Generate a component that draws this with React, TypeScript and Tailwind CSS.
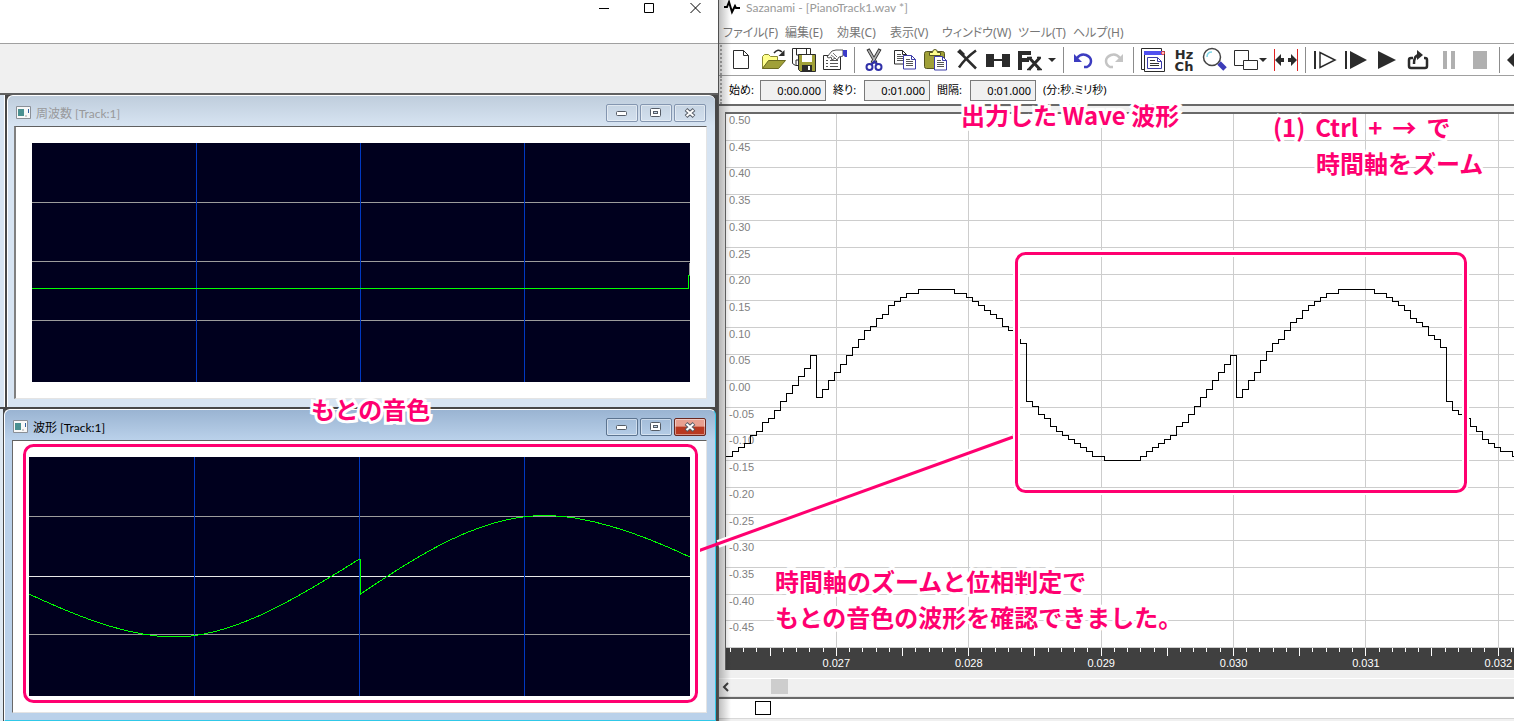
import type { ReactNode } from "react";
import clsx from "clsx";

const SAMPLES = [
  456, 451, 447, 443, 435, 431, 422, 418, 410, 401, 393, 385, 376, 368, 355,
  397, 389, 380, 372, 364, 355, 347, 339, 330, 326, 318, 314, 305, 301, 297,
  293, 293, 289, 289, 289, 289, 289, 289, 293, 293, 297, 301, 305, 310, 314,
  318, 326, 330, 339, 343, 401, 406, 414, 418, 426, 431, 435, 439, 443, 447,
  451, 456, 456, 460, 460, 460, 460, 460, 460, 456, 451, 447, 443, 439, 435,
  426, 422, 414, 406, 397, 389, 380, 372, 364, 355, 397, 389, 380, 372, 360,
  351, 343, 339, 330, 322, 318, 310, 305, 301, 297, 293, 293, 289, 289, 289,
  289, 289, 289, 293, 293, 297, 301, 305, 310, 318, 322, 326, 335, 339, 347,
  401, 410, 414, 418, 426, 431, 439, 443, 447, 451, 451, 456,
];

const LEVELS = [
  "0.50", "0.45", "0.40", "0.35", "0.30", "0.25", "0.20", "0.15", "0.10",
  "0.05", "0.00", "-0.05", "-0.10", "-0.15", "-0.20", "-0.25", "-0.30",
  "-0.35", "-0.40", "-0.45",
];

const TIMES = ["0.027", "0.028", "0.029", "0.030", "0.031", "0.032"];

const MENUS = [
  { label: "ファイル(F)", width: "w-[62px]" },
  { label: "編集(E)", width: "w-[52px]" },
  { label: "効果(C)", width: "w-[53px]" },
  { label: "表示(V)", width: "w-[52px]" },
  { label: "ウィンドウ(W)", width: "w-[76px]" },
  { label: "ツール(T)", width: "w-[55px]" },
  { label: "ヘルプ(H)", width: "w-[60px]" },
];

const RANGES = [
  { id: "start", label: "始め:", value: "0:00.000" },
  { id: "end", label: "終り:", value: "0:01.000" },
  { id: "length", label: "間隔:", value: "0:01.000" },
];

// one sample is 6px wide, the plot starts at y = 114
const wavePath = SAMPLES.map((y, i) => {
  const v = y - 114 + 0.5;
  return i === 0 ? `M0 ${v}H6.5` : `V${v}H${i * 6 + 6.5}`;
}).join("");

interface ToolProps {
  label: string;
  children: ReactNode;
}

const Tool = ({ label, children }: ToolProps) => (
  <button
    type="button"
    aria-label={label}
    className="flex h-[26px] w-[31px] shrink-0 items-center justify-center"
  >
    <svg width="26" height="26" viewBox="0 0 26 26" fill="none">
      {children}
    </svg>
  </button>
);

const Separator = () => (
  <span className="flex w-2 shrink-0 justify-center">
    <span className="h-[26px] w-px bg-[#8c8c8c]" />
  </span>
);

const Sheet = ({ x, y, color }: { x: number; y: number; color: string }) => (
  <g transform={`translate(${x} ${y})`}>
    <path d="M.5.5h8l4 4v9.500h-12z" fill="#fff" stroke={color} />
    <path d="M8.500.5v4h4" stroke={color} />
    <path d="M3 4.500h4M3 6.500h7M3 8.500h7M3 10.500h7" stroke="#555" />
  </g>
);

const Toolbar = () => (
  <div className="flex h-8 items-center overflow-hidden border-t border-[#a0a0a0] bg-white">
    <span className="ml-px mr-1 h-[30px] shrink-0 border-l-2 border-dotted border-[#b0b0b0]" />
    <Tool label="新規">
      <path d="M4.500 3.500h10l5 5v13h-15z" fill="#fff" stroke="#2b2b2b" />
      <path d="M14.500 3.500v5h5" stroke="#2b2b2b" />
    </Tool>
    <Tool label="開く">
      <path d="M2.500 21.500v-12l2-2h4l2 2h7v4h-8z" fill="#ffff8c" stroke="#8a8a30" />
      <path d="M2.500 21.500l6-8h17l-7 8z" fill="#a0a038" stroke="#6a6a20" />
      <path d="M14 6q4-5 8-1" stroke="#2b2b2b" strokeWidth="1.500" />
      <path d="M24.500 3v6h-6z" fill="#2b2b2b" />
    </Tool>
    <Tool label="保存">
      <path d="M1.500 1.500h18v17h-15l-3-2z" fill="#fff" stroke="#2b2b2b" />
      <path d="M5.500 2v6h10V2M5 18v-5h4" stroke="#2b2b2b" />
      <path d="M7.500 7.500h17v17h-15l-2-2z" fill="#a0a038" stroke="#2b2b2b" />
      <path d="M11 8h10v7H11z" fill="#fff" />
      <path d="M11 18h10v6H11z" fill="#2b2b2b" />
      <path d="M17 19h2v4h-2z" fill="#fff" />
    </Tool>
    <Tool label="プロパティ">
      <path d="M1.500 8.500h17v14h-17z" fill="#fff" stroke="#2b2b2b" />
      <path d="M4 13.500h2M8 13.500h8M4 16.500h2M8 16.500h8M4 19.500h2M8 19.500h8" stroke="#555" />
      <path d="M5 10l5-6 4-1h7v6l-4 1-2 3-2-2-3 2-1-3-2 1z" fill="#fff" stroke="#555" />
      <path d="M9 8l4 3M11 6l4 4" stroke="#777" />
      <path d="M21 3h4v7h-2l-2-2z" fill="#3c3cc8" />
    </Tool>
    <Separator />
    <Tool label="切り取り">
      <path d="M7 2l8 14M19 2l-8 14" stroke="#333" strokeWidth="3.500" />
      <path d="M7.500 3l7 12M18.500 3l-7 12" stroke="#b0b0b0" strokeWidth="1.500" />
      <circle cx="8.500" cy="20" r="3" stroke="#3030a8" strokeWidth="2" />
      <circle cx="17.500" cy="20" r="3" stroke="#3030a8" strokeWidth="2" />
      <path d="M10.500 17.500l3-3 3 3" stroke="#3030a8" strokeWidth="2" />
    </Tool>
    <Tool label="コピー">
      <Sheet x={2} y={3} color="#2b2b2b" />
      <Sheet x={11} y={8} color="#3c3ca8" />
    </Tool>
    <Tool label="貼り付け">
      <rect x="1.500" y="4.500" width="20" height="17" rx="2" fill="#a0a038" stroke="#555520" />
      <path d="M6.500 8.500v-3h3q0-3 2.500-3t2.500 3h3v3z" fill="#ffff8c" stroke="#555520" />
      <Sheet x={11} y={9} color="#3c3ca8" />
    </Tool>
    <Tool label="削除">
      <path d="M5 4.500q8 8 17 17" stroke="#2b2b2b" strokeWidth="2.500" />
      <path d="M22 3.500q-11 8-17 17" stroke="#2b2b2b" strokeWidth="2.500" />
      <path d="M3 5l3-3 5 5-2 2z" fill="#2b2b2b" />
    </Tool>
    <Tool label="間隔">
      <path d="M1 7h8v5h8V7h8v13h-8v-6H9v6H1z" fill="#2b2b2b" />
    </Tool>
    <button type="button" aria-label="エフェクト" className="shrink-0">
      <svg width="46" height="26" viewBox="0 0 46 26" fill="none">
        <path d="M5 4h13v4H9v3h7v4H9v8H5z" fill="#2b2b2b" />
        <path d="M16 10.500l11 12M27 10.500l-11 12" stroke="#2b2b2b" strokeWidth="3" />
        <path d="M14 10.500h5M24 10.500h4M14 22.500h4M24 22.500h5" stroke="#2b2b2b" strokeWidth="1.500" />
        <path d="M35 11h8l-4 4z" fill="#2b2b2b" />
      </svg>
    </button>
    <Separator />
    <Tool label="元に戻す">
      <path d="M7 11q4-5 9-3t5 6-4 6h-3" stroke="#3c3cc0" strokeWidth="2.500" />
      <path d="M4 7v8h8z" fill="#3c3cc0" />
    </Tool>
    <Tool label="やり直し">
      <path d="M19 11q-4-5-9-3t-5 6 4 6h3" stroke="#c4c4c4" strokeWidth="2.500" />
      <path d="M22 7v8h-8z" fill="#c4c4c4" />
    </Tool>
    <Separator />
    <Tool label="ウィンドウ">
      <path d="M4.500 22.500h-3v-21h20v3" stroke="#2b2b2b" />
      <path d="M4.500 4.500h20v20h-20z" fill="#fff" stroke="#2b2b2b" />
      <path d="M4 4h19v4H4z" fill="#5050f0" />
      <circle cx="23" cy="6" r="1.500" fill="#fff" stroke="#f03030" />
      <path d="M7.500 10.500h10l4 4v7h-14z" fill="#fff" stroke="#3c3ca8" />
      <path d="M17.500 10.500v4h4" stroke="#3c3ca8" />
      <path d="M10 13.500h5M10 16.500h9M10 18.500h9" stroke="#333" />
    </Tool>
    <Tool label="周波数とチャンネル">
      <g fill="#2b2b2b" textAnchor="middle" className="font-['DejaVu_Sans',sans-serif] text-[13px] font-bold">
        <text x="13" y="12">Hz</text>
        <text x="13" y="24">Ch</text>
      </g>
    </Tool>
    <Tool label="拡大">
      <path d="M17 16l6 6" stroke="#3c3cb8" strokeWidth="5" />
      <circle cx="10" cy="10" r="8.500" fill="#fff" stroke="#444" strokeWidth="1.500" />
      <path d="M5 10q0-5 5-5" stroke="#80d8e8" strokeWidth="1.500" />
    </Tool>
    <button type="button" aria-label="配置" className="shrink-0">
      <svg width="40" height="26" viewBox="0 0 40 26" fill="none">
        <path d="M4.500 3.500h14v15h-14z" fill="#fff" stroke="#2b2b2b" />
        <path d="M13.500 13.500h14v9h-14z" fill="#fff" stroke="#2b2b2b" />
        <path d="M29 11h8l-4 4z" fill="#2b2b2b" />
      </svg>
    </button>
    <Tool label="幅を合わせる">
      <path d="M1.500 2v22M24.500 2v22" stroke="#e02020" />
      <path d="M2 13l6-6v4h3v4H8v4zM24 13l-6-6v4h-3v4h3v4z" fill="#2b2b2b" />
    </Tool>
    <Separator />
    <Tool label="先頭から再生">
      <path d="M3 4v18" stroke="#2b2b2b" strokeWidth="2" />
      <path d="M8 5.500v15l15-7.500z" stroke="#2b2b2b" strokeWidth="1.500" />
    </Tool>
    <Tool label="範囲を再生">
      <path d="M3 4v18" stroke="#2b2b2b" strokeWidth="2" />
      <path d="M7 4v18l17-9z" fill="#2b2b2b" />
    </Tool>
    <Tool label="再生">
      <path d="M4 4v18l18-9z" fill="#2b2b2b" />
    </Tool>
    <Tool label="ループ">
      <path d="M8 11H6q-2 0-2 2v6q0 2 2 2h14q2 0 2-2v-6q0-2-2-2h-1M9 17q0-9 5-9" stroke="#2b2b2b" strokeWidth="2.500" />
      <path d="M12 3l6 5-6 5z" fill="#2b2b2b" />
    </Tool>
    <Tool label="一時停止">
      <path d="M7 4h4v18H7zM15 4h4v18h-4z" fill="#b0b0b0" />
    </Tool>
    <Tool label="停止">
      <path d="M6 4h14v18H6z" fill="#b0b0b0" />
    </Tool>
    <Separator />
    <Tool label="先頭へ">
      <path d="M1 13l9-9v18z" fill="#2b2b2b" />
    </Tool>
  </div>
);

interface WindowProps {
  title: string;
  active?: boolean;
  children: ReactNode;
}

const CAPTION_BUTTON =
  "flex h-[18px] w-8 items-center justify-center rounded-xs border shadow-[inset_0_0_0_1px_#ffffff70]";

const ChildWindow = ({ title, active, children }: WindowProps) => (
  <section
    className={clsx(
      "flex min-w-0 flex-1 flex-col rounded-t-md border-l border-t border-white pr-2",
      active
        ? "border-r border-b border-r-[#30c8e8] border-b-[#30c8e8] bg-[#bad1ea] bg-linear-to-b from-[#9ab4d2] to-[#bad1ea] to-[30px] pb-[7px] pl-[7px]"
        : "bg-[#d7e4f2] bg-linear-to-b from-[#bfcddc] to-[#d7e4f2] to-[30px] pb-2 pl-1.5"
    )}
  >
    <header className="flex h-[30px] shrink-0 items-center gap-1">
      <svg
        width="16"
        height="14"
        viewBox="0 0 16 14"
        className={clsx("mt-1 shrink-0", active ? "ml-px" : "ml-0.5")}
      >
        <path d="M.5.5h14v12H.5z" fill="#f8f8f8" stroke="#8a8f96" />
        <path d="M2 3h6v7H2z" fill="#4a9090" />
        <path d="M12 3h1v4h-1z" fill="#3060a0" />
        <path d="M9 9h2v2H9z" fill="#ccc" />
      </svg>
      <h2
        className={clsx(
          "mt-1.5 font-['Lato','Noto_Sans_CJK_JP',sans-serif] text-xs",
          active ? "text-black" : "text-[#98999b]"
        )}
      >
        {title}
      </h2>
      <div className="mt-1 ml-auto flex gap-0.5 pr-px">
        <button type="button" aria-label="最小化" className={clsx(CAPTION_BUTTON, active ? "border-[#5c7490]" : "border-[#8496b0]")}>
          <svg width="12" height="6" viewBox="0 0 12 6">
            <rect x=".5" y="1.500" width="10" height="4" rx="1" fill="#fff" stroke="#555c66" />
          </svg>
        </button>
        <button type="button" aria-label="最大化" className={clsx(CAPTION_BUTTON, active ? "border-[#5c7490]" : "border-[#8496b0]")}>
          <svg width="12" height="10" viewBox="0 0 12 10">
            <rect x=".5" y=".5" width="10" height="8" rx="1" fill="#fff" stroke="#555c66" />
            <rect x="3.500" y="3.500" width="4" height="2" fill="#c8d8e8" stroke="#555c66" />
          </svg>
        </button>
        <button
          type="button"
          aria-label="閉じる"
          className={clsx(CAPTION_BUTTON, active ? "border-[#6a2820] bg-linear-to-b from-[#e8a090] from-45% to-[#b83820] to-50%" : "border-[#8496b0]")}
        >
          <svg width="12" height="10" viewBox="0 0 12 10" fill="none">
            <path d="M2 1.500l8 7M10 1.500l-8 7" stroke="#555c66" strokeWidth="4" />
            <path d="M2.500 2l7 6M9.500 2l-7 6" stroke="#fff" strokeWidth="2" />
          </svg>
        </button>
      </div>
    </header>
    <div
      className={clsx(
        "min-h-0 flex-1 border-t border-r border-b border-t-[#606060] border-r-[#e4e4e4] border-b-[#e4e4e4] bg-white p-4",
        active ? "border-l border-l-[#696969]" : "border-l-2 border-l-[#808080]"
      )}
    >
      {children}
    </div>
  </section>
);

const SpectrumPlot = () => (
  <svg
    viewBox="0 0 658 239"
    preserveAspectRatio="none"
    shapeRendering="crispEdges"
    fill="none"
    className="block size-full bg-[#00001e]"
  >
    <path d="M0 59.500h658M0 118.500h658M0 177.500h658" stroke="#9c9c9c" />
    <path d="M164.500 0v239M328.500 0v239M492.500 0v239" stroke="#0038c0" />
    <path d="M657.500 120v12" stroke="#9c9c9c" />
    <path d="M0 145.500h656.500V132h1" stroke="#00ff00" />
  </svg>
);

const TonePlot = () => (
  <svg
    viewBox="0 0 661 239"
    preserveAspectRatio="none"
    shapeRendering="crispEdges"
    fill="none"
    className="block size-full bg-[#00001e]"
  >
    <path d="M0 59.500h661M0 177.500h661" stroke="#9c9c9c" />
    <path d="M0 119.500h661" stroke="#e8e8e8" />
    <path d="M165.500 0v239M330.500 0v239M495.500 0v239" stroke="#0038c0" />
    <path
      d="M0 137C60 165 105 180 146 180C205 180 270 140 330.500 102H331.500V137C390 98 450 58.500 516 58.500C560 58.500 610 76 661 100"
      stroke="#00ff00"
    />
  </svg>
);

const ToneEditor = () => (
  <section className="flex min-h-0 min-w-0 flex-col bg-white">
    <div className="flex h-[43px] shrink-0 items-start justify-end gap-[35px] pr-[17px]">
      <button type="button" aria-label="最小化">
        <svg width="11" height="17" viewBox="0 0 11 17">
          <path d="M1 8.500h10" stroke="#000" />
        </svg>
      </button>
      <button type="button" aria-label="最大化">
        <svg width="11" height="17" viewBox="0 0 11 17" fill="none">
          <path d="M.5 3.500h9v9h-9z" stroke="#000" />
        </svg>
      </button>
      <button type="button" aria-label="閉じる">
        <svg width="11" height="17" viewBox="0 0 11 17">
          <path d="M.5 3l10 10M10.500 3l-10 10" stroke="#000" />
        </svg>
      </button>
    </div>
    <div className="h-[52px] shrink-0 border-t border-b-2 border-t-[#a0a0a0] border-b-[#606060] bg-[#f0f0f0]" />
    <div className="grid min-h-0 flex-1 grid-rows-2 bg-[#484848]">
      <div className="flex min-h-0 border-b border-[#484848] pr-[3px]">
        <span className="mr-0.5 w-[5px] border-r border-white bg-[#d7e4f2]" />
        <ChildWindow title="周波数 [Track:1]">
          <SpectrumPlot />
        </ChildWindow>
      </div>
      <div className="flex min-h-0 border-t border-[#484848] pr-0.5">
        <span className="mr-px w-[3px] bg-[#dfe9f2]" />
        <ChildWindow title="波形 [Track:1]" active>
          <TonePlot />
        </ChildWindow>
      </div>
    </div>
  </section>
);

const WaveView = () => (
  <div className="flex min-h-0 flex-1 flex-col bg-[#f0f0f0] pt-1.5 pl-1.5">
    <div className="flex min-h-0 flex-1 flex-col border-t-2 border-l border-[#696969] bg-white">
      <div className="relative min-h-0 flex-1">
        <svg
          viewBox="0 0 788 534"
          preserveAspectRatio="none"
          shapeRendering="crispEdges"
          fill="none"
          className="absolute inset-0 size-full"
        >
          {LEVELS.map((level, i) => (
            <path key={level} d={`M0 ${Math.floor((i + 1) * 26.67) + 0.5}h788`} stroke="#cdcdcd" />
          ))}
          {TIMES.map((time, i) => (
            <path key={time} d={`M${Math.floor(110.4 + i * 132.35) + 0.5} 0v534`} stroke="#cdcdcd" />
          ))}
        </svg>
        <ul className="absolute inset-y-0 left-[3px] flex flex-col font-['Liberation_Sans',sans-serif] text-[11px] leading-[13px] text-[#808080]">
          {LEVELS.map((level) => (
            <li key={level} className="flex-1">
              {level}
            </li>
          ))}
        </ul>
        <svg
          viewBox="0 0 788 534"
          preserveAspectRatio="none"
          shapeRendering="crispEdges"
          fill="none"
          className="absolute inset-0 size-full"
        >
          <path d={wavePath} stroke="#000" />
        </svg>
      </div>
      <div className="h-[22px] shrink-0 overflow-hidden bg-[#404040]">
        <svg
          viewBox="0 0 788 9"
          preserveAspectRatio="none"
          shapeRendering="crispEdges"
          className="block h-[9px] w-full"
        >
          {Array.from({ length: 60 }, (_, i) => (
            <path
              key={i}
              d={`M${Math.floor(4.5 + i * 13.235) + 0.5} 0v${i % 5 === 3 ? 8 : 4}`}
              stroke="#fff"
            />
          ))}
        </svg>
        <ol className="ml-[5.6%] flex font-['Liberation_Sans',sans-serif] text-[11px] leading-[13px] text-white">
          {TIMES.map((time) => (
            <li key={time} className="shrink-0 basis-[17.8%] text-center">
              {time}
            </li>
          ))}
        </ol>
      </div>
    </div>
  </div>
);

const WaveEditor = () => (
  <section className="relative flex min-h-0 min-w-0 flex-col border-l border-[#505050] bg-white">
    <header className="flex h-4 shrink-0 items-center gap-1.5 pl-[5px] text-xs text-[#999]">
      <svg width="16" height="16" viewBox="0 0 16 16" fill="none" className="shrink-0">
        <path d="M0 7h3l2-5 3 10 3-6 1 2h4" stroke="#000" strokeWidth="2" />
      </svg>
      <h1 className="font-['Lato',sans-serif]">Sazanami - [PianoTrack1.wav *]</h1>
    </header>
    <nav className="flex h-[27px] shrink-0 items-center pt-1.5 pl-1 text-xs text-[#777] [font-feature-settings:'palt']">
      {MENUS.map(({ label, width }) => (
        <a key={label} href="#" className={clsx("shrink-0 whitespace-nowrap", width)}>
          {label}
        </a>
      ))}
    </nav>
    <Toolbar />
    <form className="flex h-[31px] shrink-0 items-center border-t border-b-2 border-t-[#a0a0a0] border-b-[#696969] text-[11px] text-black [font-feature-settings:'palt']">
      <span className="mr-[7px] ml-px h-7 border-l-2 border-dotted border-[#b0b0b0]" />
      {RANGES.map(({ id, label, value }) => (
        <div key={id} className="flex shrink-0 items-center">
          <label htmlFor={id} className={id === "length" ? "w-[33px]" : "w-[31px]"}>
            {label}
          </label>
          <input
            id={id}
            defaultValue={value}
            className="mr-[7px] h-[21px] w-[66px] border border-[#7a7a7a] bg-[#f0f0f0] pr-1 text-right"
          />
        </div>
      ))}
      <span className="whitespace-nowrap">(分:秒.ミリ秒)</span>
    </form>
    <WaveView />
    <div className="flex h-[27px] shrink-0 items-end border-b border-[#e0e0e0] bg-[#f0f0f0]">
      <div className="flex h-[18px] w-full items-start border-t border-white">
        <button type="button" aria-label="左へ" className="mr-[41px] ml-[3px] pt-0.5">
          <svg width="8" height="12" viewBox="0 0 8 12" fill="none">
            <path d="M6 2L2 6l4 4" stroke="#404040" strokeWidth="2" />
          </svg>
        </button>
        <span className="h-[15px] w-[17px] bg-[#cdcdcd]" />
      </div>
    </div>
    <div className="h-6 shrink-0 border-t-2 border-[#696969] bg-[#f0f0f0]">
      <div className="flex h-5 items-start border-b border-[#d8d8d8] bg-white pt-0.5">
        <span className="ml-9 h-3.5 w-4 border border-black" />
      </div>
    </div>
    <span className="pointer-events-none absolute inset-y-0 left-0 w-3 bg-linear-to-r from-black/25 to-transparent" />
  </section>
);

const NOTE =
  "absolute font-['Noto_Sans_CJK_JP',sans-serif] text-2xl leading-9 font-bold whitespace-nowrap text-[#ff0070] [-webkit-text-stroke:6px_white] [paint-order:stroke_fill]";

const Annotations = () => (
  <div className="pointer-events-none absolute inset-0">
    <svg viewBox="0 0 1514 721" preserveAspectRatio="none" fill="none" className="absolute inset-0 size-full">
      <path d="M718 544L1013 437" stroke="#fff" strokeWidth="8" />
      <path d="M698 551L1013 437" stroke="#ff0070" strokeWidth="3" />
      <rect x="24.500" y="445.500" width="672" height="256" rx="9" stroke="#fff" strokeWidth="7" />
      <rect x="24.500" y="445.500" width="672" height="256" rx="9" stroke="#ff0070" strokeWidth="3" />
      <rect x="1016.500" y="253.500" width="449" height="238" rx="9" stroke="#fff" strokeWidth="7" />
      <rect x="1016.500" y="253.500" width="449" height="238" rx="9" stroke="#ff0070" strokeWidth="3" />
    </svg>
    <p className={clsx(NOTE, "top-[391px] left-[311px]")}>もとの音色</p>
    <p className={clsx(NOTE, "top-[97px] left-[961px]")}>出力した Wave 波形</p>
    <div className={clsx(NOTE, "top-[109px] left-[1273px]")}>
      <p className="flex gap-2.5">
        <span>(1)</span>
        <span>Ctrl</span>
        <span>+</span>
        <span>→</span>
        <span>で</span>
      </p>
      <p className="pl-[43px]">時間軸をズーム</p>
    </div>
    <p className={clsx(NOTE, "top-[563px] left-[775px]")}>
      時間軸のズームと位相判定で
      <br />
      もとの音色の波形を確認できました。
    </p>
  </div>
);

const App = () => (
  <main className="relative grid h-screen grid-cols-[718fr_796fr] overflow-hidden font-['Noto_Sans','Noto_Sans_CJK_JP',sans-serif]">
    <ToneEditor />
    <WaveEditor />
    <Annotations />
  </main>
);

export default App;
